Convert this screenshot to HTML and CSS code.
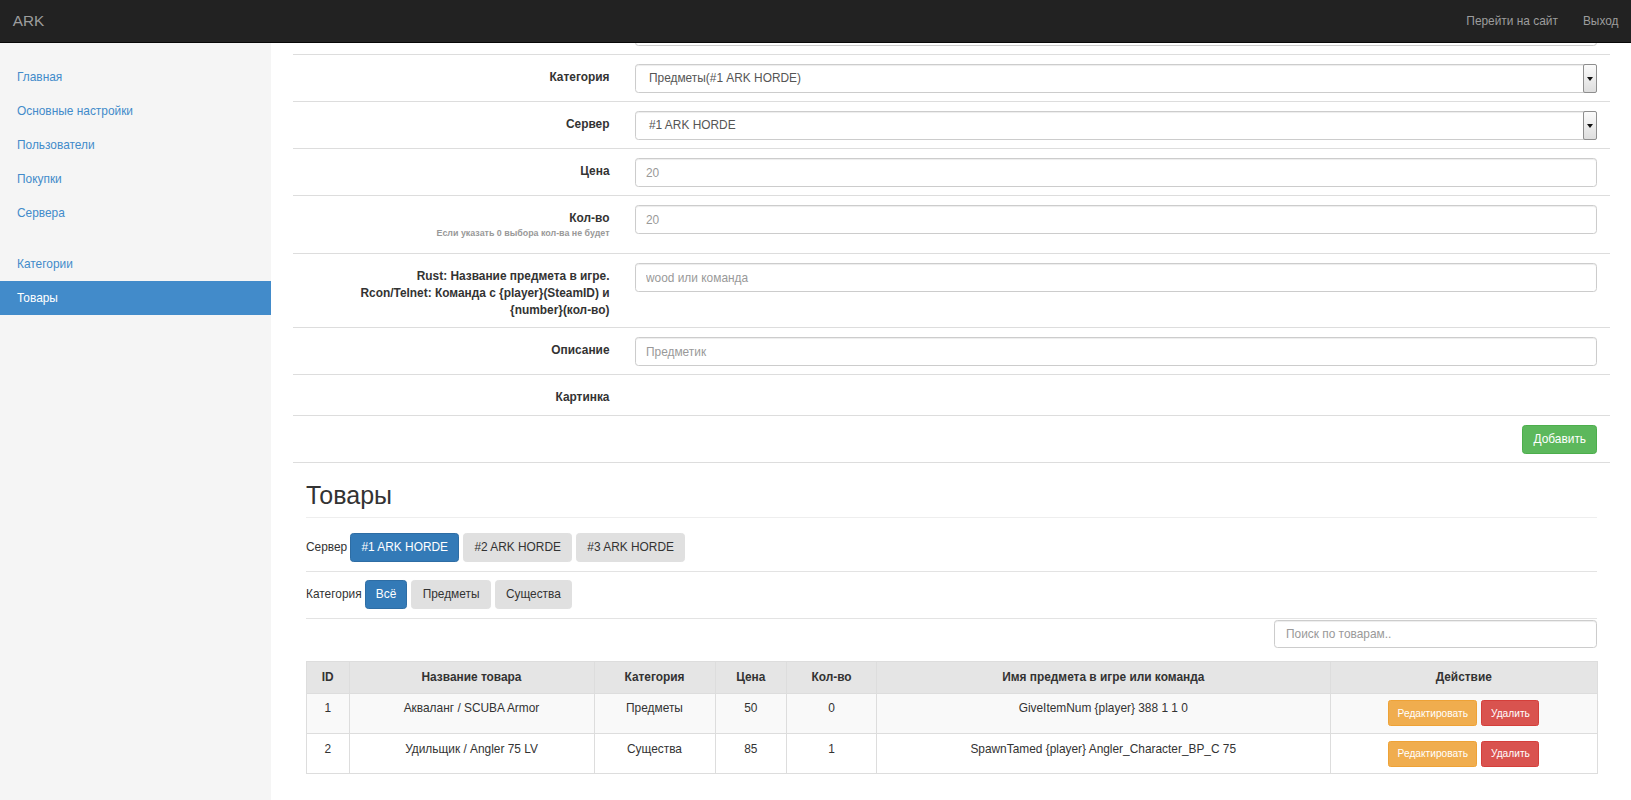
FILE: index.html
```html
<!DOCTYPE html>
<html lang="ru">
<head>
<meta charset="utf-8">
<title>ARK — Товары</title>
<link rel="stylesheet" href="styles.css">
</head>
<body>
<header class="navbar">
  <a class="brand" href="#">ARK</a>
  <nav class="nav-right">
    <a href="#">Перейти на сайт</a>
    <a href="#">Выход</a>
  </nav>
</header>
<div class="layout">
  <aside class="sidebar">
    <ul class="side-nav">
      <li><a href="#">Главная</a></li>
      <li><a href="#">Основные настройки</a></li>
      <li><a href="#">Пользователи</a></li>
      <li><a href="#">Покупки</a></li>
      <li><a href="#">Сервера</a></li>
    </ul>
    <ul class="side-nav">
      <li><a href="#">Категории</a></li>
      <li class="active"><a href="#">Товары</a></li>
    </ul>
  </aside>
  <main class="main">
    <form class="form">
      <div class="form-row">
        <label class="form-label">Название</label>
        <div class="form-control-wrap"><input class="input" placeholder="Акваланг"></div>
      </div>
      <div class="form-row">
        <label class="form-label">Категория</label>
        <div class="form-control-wrap">
          <div class="select"><span class="select-text">Предметы(#1 ARK HORDE)</span><span class="select-arrow"><span class="tri"></span></span></div>
        </div>
      </div>
      <div class="form-row">
        <label class="form-label">Сервер</label>
        <div class="form-control-wrap">
          <div class="select"><span class="select-text">#1 ARK HORDE</span><span class="select-arrow"><span class="tri"></span></span></div>
        </div>
      </div>
      <div class="form-row">
        <label class="form-label">Цена</label>
        <div class="form-control-wrap"><input class="input" placeholder="20"></div>
      </div>
      <div class="form-row">
        <label class="form-label">Кол-во<span class="help">Если указать 0 выбора кол-ва не будет</span></label>
        <div class="form-control-wrap"><input class="input" placeholder="20"></div>
      </div>
      <div class="form-row">
        <label class="form-label form-label-multi">Rust: Название предмета в игре.<br>Rcon/Telnet: Команда с {player}(SteamID) и<br>{number}(кол-во)</label>
        <div class="form-control-wrap"><input class="input" placeholder="wood или команда"></div>
      </div>
      <div class="form-row">
        <label class="form-label">Описание</label>
        <div class="form-control-wrap"><input class="input" placeholder="Предметик"></div>
      </div>
      <div class="form-row">
        <label class="form-label">Картинка</label>
        <div class="form-control-wrap"></div>
      </div>
      <div class="form-row form-row-submit">
        <div class="form-control-wrap submit-wrap"><button type="button" class="btn btn-success">Добавить</button></div>
      </div>
    </form>

    <h1 class="page-header">Товары</h1>

    <div class="filter">
      <span class="filter-label">Сервер</span>
      <button type="button" class="btn btn-primary">#1 ARK HORDE</button>
      <button type="button" class="btn btn-gray">#2 ARK HORDE</button>
      <button type="button" class="btn btn-gray">#3 ARK HORDE</button>
    </div>
    <div class="filter">
      <span class="filter-label">Категория</span>
      <button type="button" class="btn btn-primary">Всё</button>
      <button type="button" class="btn btn-gray">Предметы</button>
      <button type="button" class="btn btn-gray">Существа</button>
    </div>

    <div class="search-row">
      <input class="input search" placeholder="Поиск по товарам..">
    </div>

    <table class="table">
      <colgroup>
        <col class="c-id"><col class="c-name"><col class="c-cat"><col class="c-price"><col class="c-qty"><col class="c-cmd"><col class="c-act">
      </colgroup>
      <thead>
        <tr><th>ID</th><th>Название товара</th><th>Категория</th><th>Цена</th><th>Кол-во</th><th>Имя предмета в игре или команда</th><th>Действие</th></tr>
      </thead>
      <tbody>
        <tr class="striped">
          <td>1</td><td>Акваланг / SCUBA Armor</td><td>Предметы</td><td>50</td><td>0</td><td>GiveItemNum {player} 388 1 1 0</td>
          <td><div class="actions"><button type="button" class="btn btn-sm btn-warning">Редактировать</button><button type="button" class="btn btn-sm btn-danger">Удалить</button></div></td>
        </tr>
        <tr>
          <td>2</td><td>Удильщик / Angler 75 LV</td><td>Существа</td><td>85</td><td>1</td><td>SpawnTamed {player} Angler_Character_BP_C 75</td>
          <td><div class="actions"><button type="button" class="btn btn-sm btn-warning">Редактировать</button><button type="button" class="btn btn-sm btn-danger">Удалить</button></div></td>
        </tr>
      </tbody>
    </table>
  </main>
</div>
</body>
</html>
```

FILE: styles.css
```css
* { box-sizing: border-box; }
html, body { margin: 0; padding: 0; height: 100%; overflow: hidden; }
body {
  font-family: "Liberation Sans", Arial, sans-serif;
  font-size: 11.9px;
  line-height: 17px;
  color: #333;
  background: #fff;
}
a { text-decoration: none; }

/* navbar */
.navbar {
  position: fixed;
  top: 0; left: 0; right: 0;
  height: 43px;
  background: #222;
  border-bottom: 1px solid #080808;
  display: flex;
  align-items: center;
  justify-content: space-between;
  z-index: 10;
}
.brand {
  color: #9d9d9d;
  font-size: 15.3px;
  padding: 0 12.75px;
  line-height: 42px;
}
.nav-right { display: flex; }
.nav-right a {
  color: #9d9d9d;
  padding: 0 12.5px;
  line-height: 42px;
}

/* layout */
.layout { display: flex; min-height: 100vh; }
.sidebar {
  width: 271px;
  flex: none;
  background: #f5f5f5;
  padding-top: 60px;
}
.side-nav { list-style: none; margin: 0 0 17px; padding: 0; }
.side-nav a {
  display: block;
  padding: 8.5px 17px;
  color: #428bca;
}
.side-nav .active a { background: #428bca; color: #fff; }

.main {
  flex: 1;
  min-width: 0;
  padding: 8px 34px 0 35px;
}

/* form */
.form-row {
  display: grid;
  grid-template-columns: 25% 75%;
  margin: 0 -13px;
  padding: 9px 0 8px;
  border-bottom: 1px solid #ddd;
}
.form-label {
  padding: 5px 12.75px 1px;
  text-align: right;
  font-weight: bold;
}
.form-label-multi { padding-bottom: 0; }
.help {
  display: block;
  font-size: 8.9px;
  line-height: 13px;
  color: #999;
  margin-bottom: 4px;
}
.form-control-wrap { padding: 0 12.75px; }
.form-row-submit { grid-template-columns: 1fr; }
.submit-wrap { display: flex; justify-content: flex-end; }

.input {
  display: block;
  width: 100%;
  height: 29px;
  padding: 0 10px;
  font-family: "Liberation Sans", Arial, sans-serif;
  font-size: 11.9px;
  color: #555;
  border: 1px solid #ccc;
  border-radius: 3.4px;
  box-shadow: inset 0 1px 1px rgba(0,0,0,.075);
  background: #fff;
  outline: none;
}
.input::placeholder { color: #999; }

.select {
  display: flex;
  align-items: stretch;
  height: 29px;
  border: 1px solid #ccc;
  border-radius: 3.4px;
  box-shadow: inset 0 1px 1px rgba(0,0,0,.075);
  color: #555;
  background: #fff;
}
.select-text { flex: 1; padding-left: 13px; line-height: 27px; }
.select-arrow {
  width: 14px;
  margin: -1px -1px -1px 0;
  border: 1px solid #8e8e8e;
  border-radius: 2px;
  background: linear-gradient(#fbfbfb, #dedede);
  display: flex;
  align-items: center;
  justify-content: center;
}
.tri {
  width: 0; height: 0;
  border-left: 3px solid transparent;
  border-right: 3px solid transparent;
  border-top: 4px solid #111;
}

/* buttons */
.btn {
  display: inline-block;
  font-family: "Liberation Sans", Arial, sans-serif;
  font-size: 11.9px;
  line-height: 17px;
  height: 29px;
  padding: 5px 10.2px;
  border: 1px solid transparent;
  border-radius: 3.4px;
  cursor: pointer;
  white-space: nowrap;
}
.btn-success { background: #5cb85c; border-color: #4cae4c; color: #fff; }
.btn-primary { background: #337ab7; border-color: #2e6da4; color: #fff; }
.btn-gray { background: #e0e0e0; border-color: #e0e0e0; color: #333; }
.btn-warning { background: #f0ad4e; border-color: #eea236; color: #fff; }
.btn-danger { background: #d9534f; border-color: #d43f3a; color: #fff; }
.btn-sm {
  font-size: 10.2px;
  line-height: 15.3px;
  height: 25.8px;
  padding: 4.25px 8.5px;
  border-radius: 2.5px;
}

/* header */
.page-header {
  margin: 18px 0 7px;
  padding-bottom: 7.5px;
  border-bottom: 1px solid #eee;
  font-size: 25px;
  line-height: 28px;
  font-weight: normal;
  color: #333;
}

/* filters */
.filter {
  display: flex;
  align-items: center;
  gap: 4px;
  padding: 8px 0 9px;
  border-bottom: 1px solid #e3e3e3;
}
.filter-label { margin-right: -1px; }

.search-row {
  display: flex;
  justify-content: flex-end;
  padding-top: 1px;
}
.search { width: 323px; height: 28px; padding: 0 11px; }

/* table */
.table {
  width: 100%;
  margin-top: 13.5px;
  border-collapse: collapse;
  table-layout: fixed;
  border: 1px solid #ddd;
}
.c-id { width: 42.5px; }
.c-name { width: 245px; }
.c-cat { width: 121px; }
.c-price { width: 71.5px; }
.c-qty { width: 90px; }
.c-cmd { width: 453.5px; }
.c-act { width: 267.5px; }
.table th, .table td {
  border: 1px solid #ddd;
  padding: 6.8px 8.5px;
  text-align: center;
  vertical-align: top;
  line-height: 17px;
}
.table th { background: #e5e5e5; font-weight: bold; }
.table tbody td { height: 40.4px; }
.table tr.striped td { background: #f9f9f9; }
.actions { display: flex; justify-content: center; gap: 4px; }
```
